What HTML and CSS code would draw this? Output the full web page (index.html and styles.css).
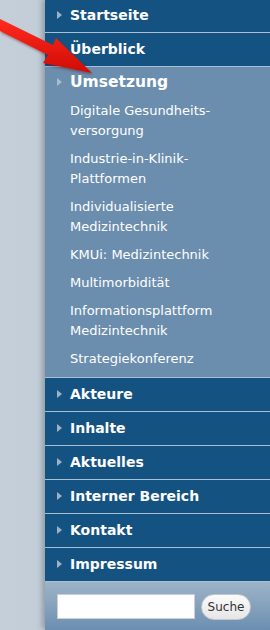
FILE: index.html
```html
<!DOCTYPE html>
<html lang="de">
<head>
    <meta charset="UTF-8">
    <meta name="viewport" content="width=device-width, initial-scale=1.0">
    <title>Navigation</title>
    <link rel="stylesheet" href="styles.css">
</head>

<body>
    <div class="page">
        <nav class="sidebar">
            <ul class="menu">
                <li class="item"><a href="#">Startseite</a></li>
                <li class="item"><a href="#">Überblick</a></li>
                <li class="item open">
                    <a href="#">Umsetzung</a>
                    <ul class="submenu">
                        <li><a href="#">Digitale Gesundheits-<br>versorgung</a></li>
                        <li><a href="#">Industrie-in-Klinik-<br>Plattformen</a></li>
                        <li><a href="#">Individualisierte<br>Medizintechnik</a></li>
                        <li><a href="#">KMUi: Medizintechnik</a></li>
                        <li><a href="#">Multimorbidität</a></li>
                        <li><a href="#">Informationsplattform<br>Medizintechnik</a></li>
                        <li><a href="#">Strategiekonferenz</a></li>
                    </ul>
                </li>
                <li class="item"><a href="#">Akteure</a></li>
                <li class="item"><a href="#">Inhalte</a></li>
                <li class="item"><a href="#">Aktuelles</a></li>
                <li class="item"><a href="#">Interner Bereich</a></li>
                <li class="item"><a href="#">Kontakt</a></li>
                <li class="item"><a href="#">Impressum</a></li>
            </ul>
            <form class="search">
                <input type="text" class="search-field">
                <button type="button" class="search-button">Suche</button>
            </form>
        </nav>

        <!-- red pointer arrow on top of the menu -->
        <svg class="pointer" width="100" height="80" viewBox="0 0 100 80">
            <defs>
                <linearGradient id="arrowFill" x1="0" y1="0" x2="0" y2="1">
                    <stop offset="0" stop-color="#ff2b1d"/>
                    <stop offset="1" stop-color="#d00b05"/>
                </linearGradient>
            </defs>
            <polygon points="0,20 53,46 56,39 92,74 43,64 48,56 0,32" fill="url(#arrowFill)"/>
        </svg>
    </div>
</body>
</html>
```

FILE: styles.css
```css
body {
    margin: 0;
    background: linear-gradient(to right, #c4cfd9 0%, #b9c5d0 80%, #a3aeb9 100%);
    font-family: 'DejaVu Sans', Verdana, sans-serif;
    height: 630px;
    overflow: hidden;
}
.page {
    position: relative;
    height: 630px;
}
.sidebar {
    margin-left: 45px;
    width: 225px;
    height: 630px;
    background: #6b8eae;
    box-shadow: -3px 0 5px rgba(60,70,80,0.35);
}
.menu {
    list-style: none;
    margin: -1px 0 0 0;
    padding: 0;
}
.item {
    border-bottom: 1px solid #a7bed3;
    background: #145281;
}
.item > a {
    display: block;
    height: 33px;
    line-height: 33px;
    padding-left: 25px;
    position: relative;
    color: #fff;
    font-weight: bold;
    font-size: 14px;
    text-decoration: none;
}
.item > a::before {
    content: "";
    position: absolute;
    left: 12px;
    top: 12px;
    border-left: 5px solid #9fb2c5;
    border-top: 4px solid transparent;
    border-bottom: 4px solid transparent;
}
.item.open {
    background: #6b8eae;
    padding-bottom: 4px;
}
.item.open > a {
    height: 30px;
    line-height: 30px;
    font-size: 15.5px;
}
.item.open > a::before {
    top: 11px;
    border-left-color: #a9bccd;
}
.submenu {
    list-style: none;
    margin: 0;
    padding: 0;
}
.submenu a {
    display: block;
    padding: 4px 0 4px 25px;
    line-height: 20px;
    font-size: 13px;
    color: #fff;
    text-decoration: none;
}
.search {
    display: flex;
    align-items: center;
    gap: 6px;
    height: 49px;
    padding-left: 12px;
    background: linear-gradient(to bottom, #9cb3c8 0%, #8aa5be 40%, #6a8eb0 100%);
}
.search-field {
    width: 138px;
    height: 25px;
    box-sizing: border-box;
    border: 1px solid #c9cfd5;
    background: #fff;
    margin: 0;
}
.search-button {
    height: 26px;
    width: 50px;
    padding: 0;
    border: 1px solid #c2c7cc;
    border-radius: 13px;
    background: linear-gradient(to bottom, #fbfbfb, #e6e6e6);
    font-family: 'DejaVu Sans', Verdana, sans-serif;
    font-size: 12px;
    color: #333;
}
.pointer {
    position: absolute;
    left: 0;
    top: 0;
    filter: drop-shadow(1px 2px 1px rgba(80,0,0,0.35));
}
```
